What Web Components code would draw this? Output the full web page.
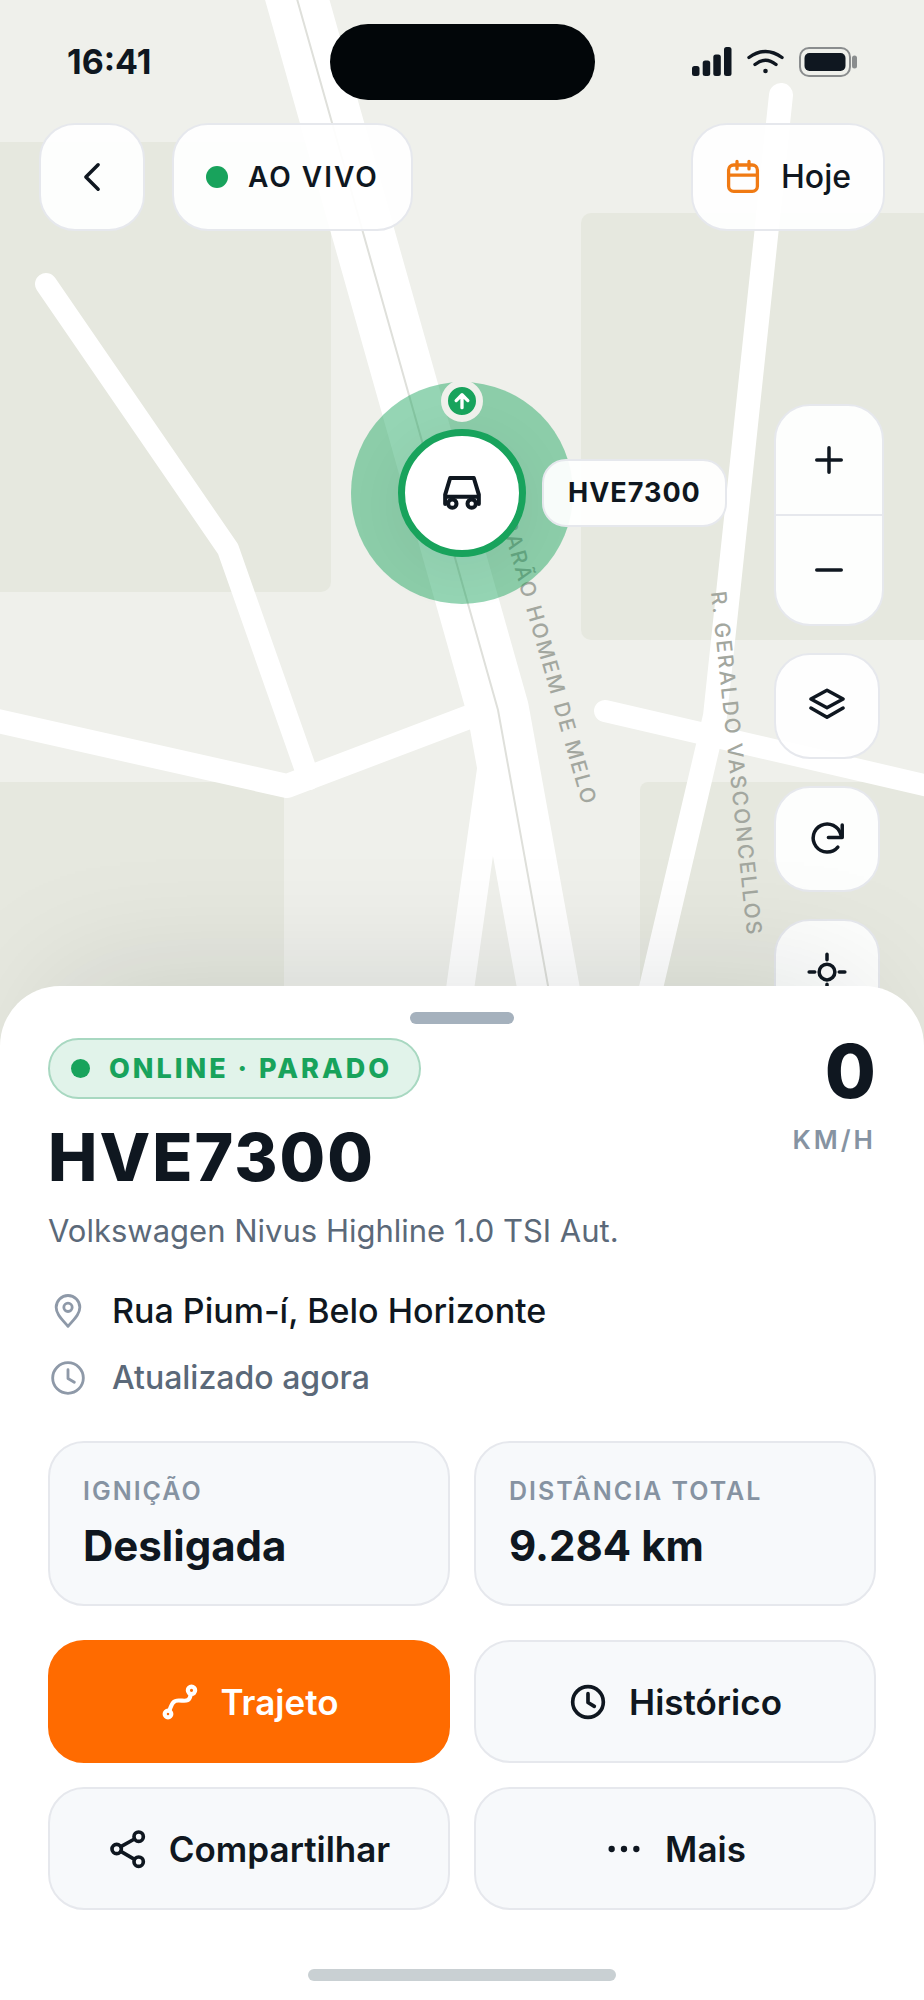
<!DOCTYPE html>
<html lang="pt-BR">
<head>
<meta charset="utf-8">
<meta name="viewport" content="width=device-width, initial-scale=1">
<title>HVE7300</title>
<style>
	body {
		margin: 0;
		background: #fff;
		--ink: #0f1720;
		--slate: #5b6979;
		--muted: #8693a2;
		--green: #18a35c;
		--orange: #ff6b00;
		--line: #e6e8ed;
		font-family: Inter, "Liberation Sans", sans-serif;
		color: var(--ink);
	}
</style>
</head>
<body>

<tracker-app>
	<map-view slot="map">
		<status-bar slot="status" time="16:41"></status-bar>
		<glass-button slot="left" icon="back" label="Voltar"></glass-button>
		<glass-button slot="left" dot tracked>AO VIVO</glass-button>
		<glass-button slot="right" icon="calendar">Hoje</glass-button>
		<zoom-control slot="controls"></zoom-control>
		<glass-button slot="controls" icon="layers" label="Camadas"></glass-button>
		<glass-button slot="controls" icon="refresh" label="Atualizar"></glass-button>
		<glass-button slot="controls" icon="locate" label="Centralizar"></glass-button>
		<vehicle-marker slot="marker">HVE7300</vehicle-marker>
	</map-view>

	<vehicle-sheet slot="sheet">
		<status-badge slot="badge">ONLINE · PARADO</status-badge>
		<span slot="plate">HVE7300</span>
		<span slot="model">Volkswagen Nivus Highline 1.0 TSI Aut.</span>
		<speed-readout slot="speed" unit="KM/H">0</speed-readout>
		<info-row slot="info" icon="pin" strong>Rua Pium-í, Belo Horizonte</info-row>
		<info-row slot="info" icon="clock">Atualizado agora</info-row>
		<stat-card slot="stats" name="IGNIÇÃO">Desligada</stat-card>
		<stat-card slot="stats" name="DISTÂNCIA TOTAL">9.284 km</stat-card>
		<action-button slot="actions" icon="route" primary>Trajeto</action-button>
		<action-button slot="actions" icon="clock">Histórico</action-button>
		<action-button slot="actions" icon="share">Compartilhar</action-button>
		<action-button slot="actions" icon="more">Mais</action-button>
	</vehicle-sheet>
</tracker-app>

<script>
class BaseElement extends HTMLElement {

	connectedCallback() {
		if(this.shadowRoot) return;
		this.attachShadow({ mode: "open" });
		this.shadowRoot.innerHTML = this.constructor.template(this);
	}

}

const ICONS = {
	back: `<path d="M15.5 5l-7 7 7 7"/>`,
	calendar: `<rect x="2.4" y="4" width="19.2" height="17.6" rx="3.4"/><path d="M2.4 10.8h19.2M8 1.6v5M16 1.6v5"/>`,
	plus: `<path d="M12 5v14M5 12h14"/>`,
	minus: `<path d="M5 12h14"/>`,
	layers: `<path d="M12 3l9.2 5-9.2 5-9.2-5z"/><path d="M2.8 13.2l9.2 5.2 9.2-5.2"/>`,
	refresh: `<path d="M18.2 16.600A8 8 0 1 1 19.900 9.600"/><path d="M20.700 4v7.200h-7.900"/>`,
	locate: `<circle cx="12" cy="12" r="4.5"/><path d="M1.8 12h3.2M19 12h3.2M12 1.8v3.2M12 19v3.2"/>`,
	pin: `<path d="M12 21.2C8.5 17 4.9 14 4.9 9.8a7.1 7.1 0 0 1 14.2 0c0 4.2-3.6 7.2-7.1 11.4z"/><circle cx="12" cy="9.8" r="2.5"/>`,
	clock: `<circle cx="12" cy="12" r="9.2"/><path d="M12 7v5.300l3.800 2.300"/>`,
	route: `<circle cx="4.8" cy="19.2" r="2"/><circle cx="18.9" cy="5" r="2.2"/><path d="M5.6 17.300c1.600-4.800 2.600-6.200 5.600-6.200 3.600 0 6.600 1.400 7.200-3.600"/>`,
	share: `<circle cx="5.2" cy="12" r="2.8"/><circle cx="18.4" cy="4.6" r="2.8"/><circle cx="18.4" cy="19.6" r="2.8"/><path d="M7.7 10.6l8.200-4.600M7.7 13.4l8.200 4.800"/>`,
	more: `<g fill="currentColor" stroke="none"><circle cx="4.6" cy="12" r="1.9"/><circle cx="12" cy="12" r="1.9"/><circle cx="19.4" cy="12" r="1.9"/></g>`,
	car: `<path d="M1.9 18.600v-5.600L4.900 3h14.200l3 10v5.600M1.900 14.200h20.200"/><circle cx="6.2" cy="18.4" r="2.500"/><circle cx="17.8" cy="18.4" r="2.500"/>`,
	up: `<path d="M12 20V5M5 11.500L12 4.500l7 7"/>`
};

class UiIcon extends BaseElement {

	static template(el) {
		return `
			<style>
				:host {
					display: block;
					flex: none;
					width: var(--icon-size, 40px);
					height: var(--icon-size, 40px);
				}
				svg {
					display: block;
					width: 100%;
					height: 100%;
					fill: none;
					stroke: currentColor;
					stroke-width: var(--icon-stroke, 2.2);
					stroke-linecap: round;
					stroke-linejoin: round;
				}
			</style>
			<svg viewBox="0 0 24 24" aria-hidden="true">${ICONS[el.getAttribute("name")]}</svg>
		`;
	}

}

class TrackerApp extends BaseElement {

	static template() {
		return `
			<style>
				:host {
					display: flex;
					flex-direction: column;
					min-height: 100vh;
				}
				::slotted([slot="sheet"]) {
					flex: 1;
					/* the sheet covers the lower edge of the map */
					margin-top: -60px;
				}
			</style>
			<slot name="map"></slot>
			<slot name="sheet"></slot>
		`;
	}

}

class StatusBar extends BaseElement {

	static template(el) {
		return `
			<style>
				:host {
					display: grid;
					grid-template-columns: 1fr auto 1fr;
					align-items: center;
					padding: 24px 67px 0;
				}
				.time {
					font-size: 34px;
					line-height: 40px;
					font-weight: 700;
				}
				.island {
					width: 265px;
					height: 76px;
					border-radius: 38px;
					background: #020609;
				}
				.icons {
					display: flex;
					justify-content: flex-end;
					align-items: center;
					gap: 15px;
				}
				svg { display: block; }
			</style>
			<div class="time">${el.getAttribute("time")}</div>
			<div class="island"></div>
			<div class="icons">
				<svg width="40" height="30" viewBox="0 0 40 30" fill="#0f1720">
					<rect y="19" width="7.5" height="10" rx="2.5"/>
					<rect x="10.7" y="13.5" width="7.5" height="15.5" rx="2.5"/>
					<rect x="21.3" y="7.5" width="7.5" height="21.5" rx="2.5"/>
					<rect x="32" width="7.5" height="29" rx="2.5"/>
				</svg>
				<svg width="37" height="28" viewBox="0 0 37 28" fill="none" stroke="#0f1720" stroke-width="3.4" stroke-linecap="round">
					<path d="M2 9.5Q18.5-2.5 35 9.5M8 16.5Q18.5 8 29 16.5"/>
					<circle cx="18.5" cy="23" r="2.3" fill="#0f1720" stroke="none"/>
				</svg>
				<svg width="58" height="30" viewBox="0 0 58 30">
					<rect x="1" y="1" width="50" height="28" rx="9" fill="none" stroke="#8a8d8e" stroke-width="2"/>
					<rect x="5.5" y="6" width="41" height="18" rx="5" fill="#0f1720"/>
					<rect x="53" y="8.5" width="5" height="13" rx="2.5" fill="#8a8d8e"/>
				</svg>
			</div>
		`;
	}

}

class MapCanvas extends BaseElement {

	static template() {
		return `
			<style>
				:host {
					display: block;
					position: absolute;
					inset: 0;
					background: #eff0eb;
				}
				svg {
					display: block;
					width: 100%;
					height: 100%;
				}
				.blocks { fill: #e6e8df; }
				.roads {
					fill: none;
					stroke: #fff;
					stroke-linecap: round;
					stroke-linejoin: round;
				}
				.lane {
					fill: none;
					stroke: #dfe0db;
					stroke-width: 2;
				}
				text {
					font-size: 21px;
					font-weight: 500;
					letter-spacing: 2px;
					fill: #a3a79f;
				}
			</style>
			<svg viewBox="0 0 924 1046" preserveAspectRatio="xMidYMin slice">
				<g class="blocks">
					<rect x="-20" y="142" width="351" height="450" rx="10"/>
					<rect x="581" y="213" width="380" height="427" rx="10"/>
					<rect x="-20" y="782" width="304" height="300" rx="4"/>
					<rect x="640" y="782" width="320" height="300" rx="8"/>
				</g>
				<g class="roads">
					<path stroke-width="22" d="M46 284L228 549 309 779"/>
					<path stroke-width="24" d="M-20 717L287 786 490 709"/>
					<path stroke-width="28" d="M498 720L450 1060"/>
					<path stroke-width="24" d="M781 95L715 716 634 1060"/>
					<path stroke-width="22" d="M605 711L950 791"/>
					<path stroke-width="62" d="M286-40L498 710 566 1085"/>
				</g>
				<path class="lane" d="M286-40L498 710 566 1085"/>
				<text transform="translate(583 807) rotate(74)" text-anchor="end">BARÃO HOMEM DE MELO</text>
				<text transform="translate(711 592) rotate(84)">R. GERALDO VASCONCELLOS</text>
			</svg>
		`;
	}

}

class MapView extends BaseElement {

	static template() {
		return `
			<style>
				:host {
					display: block;
					position: relative;
					height: 1046px;
					overflow: hidden;
				}
				.overlay {
					position: relative;
				}
				.toolbar {
					display: flex;
					justify-content: space-between;
					padding: 23px 39px 0;
				}
				.group {
					display: flex;
					gap: 27px;
				}
				.side {
					display: flex;
					justify-content: flex-end;
					padding: 173px 40px 0;
				}
				.controls {
					display: flex;
					flex-direction: column;
					align-items: flex-start;
					gap: 27px;
				}
				/* pinned to the vehicle's place on the map */
				::slotted([slot="marker"]) {
					position: absolute;
					left: 50%;
					top: 493px;
				}
			</style>
			<map-canvas></map-canvas>
			<slot name="marker"></slot>
			<div class="overlay">
				<slot name="status"></slot>
				<div class="toolbar">
					<div class="group"><slot name="left"></slot></div>
					<div class="group"><slot name="right"></slot></div>
				</div>
				<div class="side">
					<div class="controls"><slot name="controls"></slot></div>
				</div>
			</div>
		`;
	}

}

class GlassButton extends BaseElement {

	static template(el) {
		const icon = el.getAttribute("icon");
		const label = el.getAttribute("label");
		return `
			<style>
				:host { display: block; }
				button {
					box-sizing: border-box;
					display: flex;
					align-items: center;
					justify-content: center;
					gap: 20px;
					height: 108px;
					padding: 0 32px;
					border: 2px solid var(--line);
					border-radius: 36px;
					background: rgba(255, 255, 255, .92);
					font: 500 32px/36px Inter, "Liberation Sans", sans-serif;
					color: var(--ink);
					cursor: pointer;
					--icon-size: 36px;
				}
				button[aria-label] {
					width: 106px;
					padding: 0;
					--icon-size: 42px;
					--icon-stroke: 2;
				}
				:host([slot="controls"]) button { height: 106px; }
				:host([tracked]) button {
					font-size: 28px;
					font-weight: 600;
					letter-spacing: 2px;
				}
				:host([icon="calendar"]) ui-icon { color: #f07a13; }
				.dot {
					width: 22px;
					height: 22px;
					border-radius: 50%;
					background: var(--green);
				}
			</style>
			<button type="button" ${label ? `aria-label="${label}"` : ""}>
				${el.hasAttribute("dot") ? `<span class="dot"></span>` : ""}
				${icon ? `<ui-icon name="${icon}"></ui-icon>` : ""}
				${label ? "" : `<slot></slot>`}
			</button>
		`;
	}

}

class ZoomControl extends BaseElement {

	static template() {
		return `
			<style>
				:host {
					display: flex;
					flex-direction: column;
					border: 2px solid var(--line);
					border-radius: 36px;
					background: rgba(255, 255, 255, .92);
					--icon-size: 42px;
					--icon-stroke: 2;
				}
				button {
					display: flex;
					align-items: center;
					justify-content: center;
					width: 106px;
					height: 108px;
					padding: 0;
					border: none;
					background: none;
					color: var(--ink);
					cursor: pointer;
				}
				button + button {
					box-sizing: content-box;
					border-top: 2px solid var(--line);
				}
			</style>
			<button type="button" aria-label="Aproximar"><ui-icon name="plus"></ui-icon></button>
			<button type="button" aria-label="Afastar"><ui-icon name="minus"></ui-icon></button>
		`;
	}

}

class VehicleMarker extends BaseElement {

	static template() {
		return `
			<style>
				:host {
					display: block;
					width: 0;
					height: 0;
				}
				.halo, .pin, .heading, .plate {
					position: absolute;
					display: flex;
					align-items: center;
					justify-content: center;
					box-sizing: border-box;
				}
				.halo, .pin, .heading {
					border-radius: 50%;
					transform: translate(-50%, -50%);
				}
				.halo {
					width: 222px;
					height: 222px;
					background: rgba(24, 163, 92, .46);
				}
				.pin {
					width: 128px;
					height: 128px;
					border: 7px solid var(--green);
					background: #fff;
					box-shadow: 0 12px 60px rgba(15, 23, 32, .06);
					--icon-size: 40px;
					--icon-stroke: 2.4;
				}
				.heading {
					top: -92px;
					width: 42px;
					height: 42px;
					border: 7px solid #eff0eb;
					background: var(--green);
					color: #fff;
					--icon-size: 20px;
					--icon-stroke: 4;
				}
				.plate {
					left: 80px;
					height: 68px;
					padding: 0 24px;
					transform: translateY(-50%);
					border: 2px solid var(--line);
					border-radius: 24px;
					background: rgba(255, 255, 255, .94);
					font-size: 27px;
					line-height: 36px;
					font-weight: 700;
					letter-spacing: 1px;
				}
			</style>
			<div class="halo"></div>
			<div class="pin"><ui-icon name="car"></ui-icon></div>
			<div class="heading"><ui-icon name="up"></ui-icon></div>
			<div class="plate"><slot></slot></div>
		`;
	}

}

class VehicleSheet extends BaseElement {

	static template() {
		return `
			<style>
				:host {
					box-sizing: border-box;
					display: flex;
					flex-direction: column;
					position: relative;
					padding: 26px 48px 19px;
					border-radius: 60px 60px 0 0;
					background: #fff;
					box-shadow: 0 -60px 130px -60px rgba(15, 23, 32, .13);
				}
				.grabber, .home {
					align-self: center;
					height: 12px;
					border-radius: 6px;
				}
				.grabber {
					width: 104px;
					background: #a5b1bd;
				}
				.home {
					width: 308px;
					margin-top: auto;
					background: #c9d0d3;
				}
				header {
					display: flex;
					justify-content: space-between;
					align-items: flex-start;
					margin-top: 14px;
				}
				h1 {
					margin: 20px 0 0;
					font-size: 66px;
					line-height: 76px;
					font-weight: 800;
					letter-spacing: 2px;
				}
				.model {
					margin: 16px 0 0;
					font-size: 31px;
					line-height: 40px;
					font-weight: 400;
					color: var(--slate);
				}
				.info {
					display: grid;
					gap: 27px;
					margin-top: 40px;
				}
				.grid {
					display: grid;
					grid-template-columns: 1fr 1fr;
					gap: 24px;
					margin-top: 34px;
				}
				.stats { margin-top: 43px; }
			</style>
			<div class="grabber"></div>
			<header>
				<div>
					<slot name="badge"></slot>
					<h1><slot name="plate"></slot></h1>
					<p class="model"><slot name="model"></slot></p>
				</div>
				<slot name="speed"></slot>
			</header>
			<div class="info"><slot name="info"></slot></div>
			<div class="grid stats"><slot name="stats"></slot></div>
			<div class="grid"><slot name="actions"></slot></div>
			<div class="home"></div>
		`;
	}

}

class StatusBadge extends BaseElement {

	static template() {
		return `
			<style>
				:host {
					box-sizing: border-box;
					display: inline-flex;
					vertical-align: top;
					align-items: center;
					gap: 19px;
					height: 61px;
					padding: 0 27px 0 21px;
					border: 2px solid #a8d8c1;
					border-radius: 31px;
					background: #e1f3ea;
					color: var(--green);
					font-size: 27px;
					line-height: 32px;
					font-weight: 800;
					letter-spacing: 3px;
				}
				.dot {
					width: 19px;
					height: 19px;
					border-radius: 50%;
					background: currentColor;
				}
			</style>
			<span class="dot"></span>
			<slot></slot>
		`;
	}

}

class SpeedReadout extends BaseElement {

	static template(el) {
		return `
			<style>
				:host {
					display: block;
					text-align: right;
				}
				.value {
					font-size: 74px;
					line-height: 66px;
					font-weight: 800;
				}
				.unit {
					margin-top: 20px;
					font-size: 26px;
					line-height: 32px;
					font-weight: 600;
					letter-spacing: 3px;
					color: var(--muted);
				}
			</style>
			<div class="value"><slot></slot></div>
			<div class="unit">${el.getAttribute("unit")}</div>
		`;
	}

}

class InfoRow extends BaseElement {

	static template(el) {
		return `
			<style>
				:host {
					display: flex;
					align-items: center;
					gap: 24px;
					font-size: 32px;
					line-height: 40px;
					font-weight: 500;
					color: var(--slate);
				}
				:host([strong]) {
					font-size: 34px;
					color: var(--ink);
				}
				ui-icon {
					color: #8e99a8;
					--icon-stroke: 1.7;
				}
			</style>
			<ui-icon name="${el.getAttribute("icon")}"></ui-icon>
			<slot></slot>
		`;
	}

}

class StatCard extends BaseElement {

	static template(el) {
		return `
			<style>
				:host {
					display: block;
					padding: 31px 33px 34px;
					border: 2px solid var(--line);
					border-radius: 36px;
					background: #f7f9fb;
				}
				.name {
					font-size: 25px;
					line-height: 34px;
					font-weight: 600;
					letter-spacing: 2px;
					color: var(--muted);
				}
				.value {
					margin-top: 14px;
					font-size: 42px;
					line-height: 48px;
					font-weight: 700;
				}
			</style>
			<div class="name">${el.getAttribute("name")}</div>
			<div class="value"><slot></slot></div>
		`;
	}

}

class ActionButton extends BaseElement {

	static template(el) {
		return `
			<style>
				:host { display: block; }
				button {
					box-sizing: border-box;
					display: flex;
					align-items: center;
					justify-content: center;
					gap: 21px;
					width: 100%;
					height: 123px;
					padding: 0 24px;
					border: 2px solid var(--line);
					border-radius: 36px;
					background: #f7f9fb;
					font: 600 35px/40px Inter, "Liberation Sans", sans-serif;
					color: var(--ink);
					cursor: pointer;
				}
				:host([primary]) button {
					border-color: var(--orange);
					background: var(--orange);
					color: #fff;
					--icon-stroke: 2.5;
				}
			</style>
			<button type="button">
				<ui-icon name="${el.getAttribute("icon")}"></ui-icon>
				<slot></slot>
			</button>
		`;
	}

}

customElements.define("ui-icon", UiIcon);
customElements.define("tracker-app", TrackerApp);
customElements.define("status-bar", StatusBar);
customElements.define("map-canvas", MapCanvas);
customElements.define("map-view", MapView);
customElements.define("glass-button", GlassButton);
customElements.define("zoom-control", ZoomControl);
customElements.define("vehicle-marker", VehicleMarker);
customElements.define("vehicle-sheet", VehicleSheet);
customElements.define("status-badge", StatusBadge);
customElements.define("speed-readout", SpeedReadout);
customElements.define("info-row", InfoRow);
customElements.define("stat-card", StatCard);
customElements.define("action-button", ActionButton);
</script>
</body>
</html>
